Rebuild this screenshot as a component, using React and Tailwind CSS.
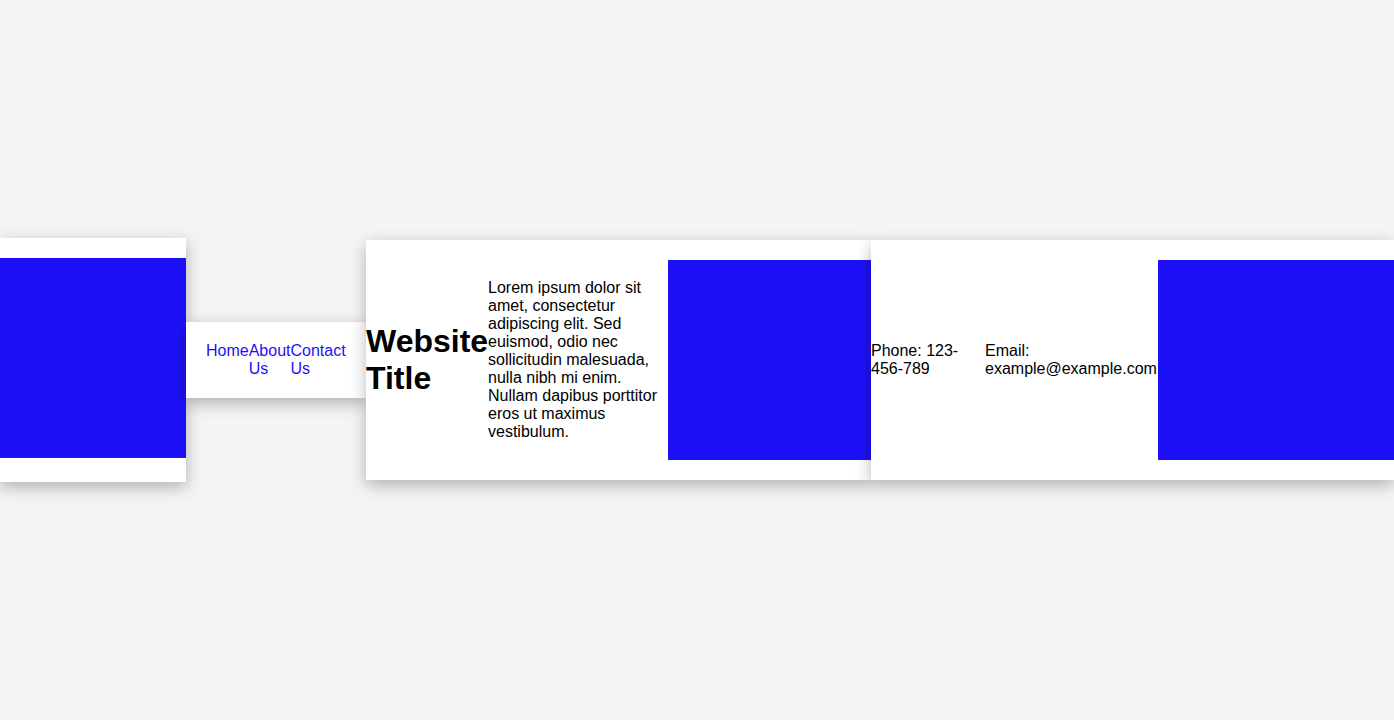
export default function App() {
  const font = { fontFamily: '"Liberation Sans", Arial, sans-serif' };
  const box = "bg-white shadow-[0_5px_15px_rgba(0,0,0,0.28)]";
  return (
    <div className="flex h-[720px] w-[1394px] items-center overflow-hidden bg-[#f4f4f4] text-black" style={font}>
      <header className={`${box} relative z-[1] shrink-0 pt-5 pb-6`}>
        <div className="h-[200px] w-[186px] bg-[#1e10f6]" />
      </header>
      <nav className={`${box} relative z-[2] flex w-[180px] shrink-0 justify-center px-5 py-5 text-base leading-[18px]`}>
        <a href="#" className="text-[#1e10f6]">Home</a>
        <a href="#" className="w-[42px] text-[#1e10f6]">About Us</a>
        <a href="#" className="text-[#1e10f6]">Contact Us</a>
      </nav>
      <main className={`${box} relative z-[3] flex w-[505px] shrink-0 items-center py-5`}>
        <h1 className="w-[122px] shrink-0 text-[32px] font-bold leading-[37px]">Website Title</h1>
        <p className="w-[180px] shrink-0 text-base leading-[18px]">
          Lorem ipsum dolor sit amet, consectetur adipiscing elit. Sed euismod, odio nec sollicitudin malesuada, nulla nibh mi enim. Nullam dapibus porttitor eros ut maximus vestibulum.
        </p>
        <div className="h-[200px] w-[203px] shrink-0 bg-[#1e10f6]" />
      </main>
      <footer className={`${box} relative z-[4] flex w-[523px] shrink-0 items-center py-5 text-base leading-[18px]`}>
        <p className="w-[114px] shrink-0">Phone: 123-456-789</p>
        <p className="w-[173px] shrink-0">Email: example@example.com</p>
        <div className="h-[200px] w-[236px] shrink-0 bg-[#1e10f6]" />
      </footer>
    </div>
  );
}
